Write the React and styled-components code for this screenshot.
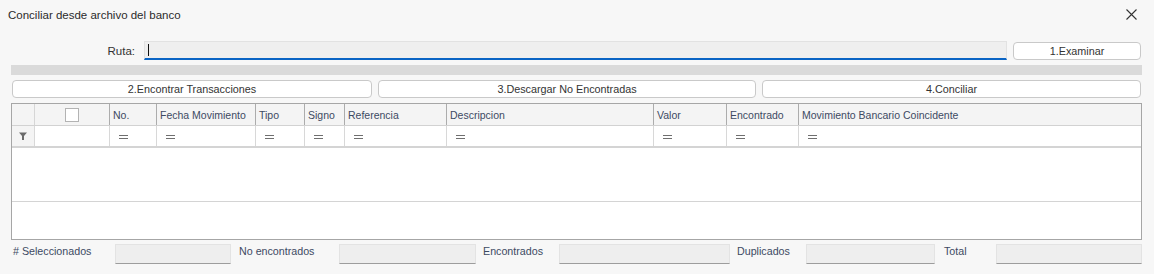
import React from 'react';
import styled, { createGlobalStyle } from 'styled-components';

const GlobalStyle = createGlobalStyle`
  html, body {
    margin: 0;
    padding: 0;
    background: #f7f7f7;
  }
  * {
    box-sizing: border-box;
  }
`;

const Window = styled.div`
  width: 1154px;
  height: 274px;
  background: #f7f7f7;
  font-family: 'Liberation Sans', Arial, sans-serif;
  color: #333333;
  overflow: hidden;
`;

const TitleBar = styled.div`
  height: 29px;
  display: flex;
  align-items: center;
  justify-content: space-between;
  padding: 0 17px 0 8px;
`;

const Title = styled.span`
  font-size: 11.5px;
  color: #2b2b2b;
`;

const CloseButton = styled.button`
  width: 12px;
  height: 12px;
  padding: 0;
  border: 0;
  background: transparent;
  display: flex;
  align-items: center;
  justify-content: center;
  cursor: pointer;
`;

const Content = styled.div`
  padding: 12px 12px 0 11px;
  display: flex;
  flex-direction: column;
`;

const PathRow = styled.div`
  display: flex;
  align-items: flex-end;
  height: 19px;
`;

const PathLabel = styled.label`
  width: 124px;
  text-align: right;
  font-size: 11.5px;
  margin-right: 9px;
  align-self: center;
  color: #333;
`;

const PathInput = styled.div`
  flex: 1;
  height: 19px;
  background: #efefef;
  border-top: 1px solid #e2e2e2;
  border-left: 1px solid #e2e2e2;
  border-right: 1px solid #e2e2e2;
  border-bottom: 2px solid #0a64c4;
  display: flex;
  align-items: center;
  padding-left: 3px;
`;

const Caret = styled.span`
  width: 1px;
  height: 12px;
  background: #111;
`;

const Button = styled.button`
  height: 18px;
  padding: 0;
  border: 1px solid #c9c9c9;
  border-radius: 4px;
  background: #ffffff;
  font-family: 'Liberation Sans', Arial, sans-serif;
  font-size: 10.8px;
  color: #333;
  display: flex;
  align-items: center;
  justify-content: center;
  cursor: pointer;
`;

const BrowseButton = styled(Button)`
  width: 128px;
  margin-left: 6px;
  margin-right: 1px;
`;

const Progress = styled.div`
  margin-top: 5px;
  height: 10px;
  background: #dadada;
`;

const ActionRow = styled.div`
  margin-top: 5px;
  display: grid;
  grid-template-columns: 360px 378px 1fr;
  gap: 6px;
  padding: 0 1px 0 1px;
`;

const GridBox = styled.div`
  margin-top: 5px;
  height: 137px;
  border: 1px solid #a6a6a6;
  background: #ffffff;
  display: flex;
  flex-direction: column;
`;

const columns = '22px 75px 47px 99px 49px 40px 102px 207px 73px 72px 1fr';

const HeaderRow = styled.div`
  display: grid;
  grid-template-columns: ${columns};
  height: 22px;
  background: #f4f4f4;
  border-bottom: 1px solid #d2d2d2;
`;

const HeaderCell = styled.div`
  display: flex;
  align-items: center;
  justify-content: ${(p) => (p.$center ? 'center' : 'flex-start')};
  padding-left: ${(p) => (p.$center ? 0 : 3)}px;
  border-left: ${(p) => (p.$first ? 'none' : `1px solid ${p.$light ? '#d6d6d6' : '#acacac'}`)};
  font-size: 10.5px;
  color: #3d4a63;
  white-space: nowrap;
  overflow: hidden;
`;

const FilterRow = styled.div`
  display: grid;
  grid-template-columns: ${columns};
  height: 22px;
  border-bottom: 2px solid #d4d4d4;
`;

const FilterCell = styled.div`
  display: flex;
  align-items: center;
  justify-content: ${(p) => (p.$center ? 'center' : 'flex-start')};
  padding-left: ${(p) => (p.$center ? 0 : 9)}px;
  border-left: ${(p) => (p.$first ? 'none' : '1px solid #d8d8d8')};
  background: ${(p) => (p.$first ? '#f4f4f4' : '#ffffff')};
`;

const EqualsMark = styled.span`
  width: 9px;
  height: 4px;
  border-top: 1px solid #6f6f6f;
  border-bottom: 1px solid #6f6f6f;
  margin-top: 1px;
`;

const Checkbox = styled.span`
  width: 14px;
  height: 14px;
  border: 1px solid #b3b3b3;
  background: #ffffff;
`;

const DataRow = styled.div`
  height: 54px;
  border-bottom: 1px solid #d4d4d4;
`;

const Footer = styled.div`
  margin-top: 4px;
  display: grid;
  grid-template-columns: 104px 116px 108px 137px 83px 171px 76px 129px 61px 1fr;
  align-items: start;
`;

const FooterLabel = styled.span`
  padding-left: ${(p) => p.$pad}px;
  padding-top: 1px;
  font-size: 10.7px;
  line-height: 13px;
  color: #3d4a63;
  white-space: nowrap;
`;

const CountBox = styled.div`
  height: 20px;
  background: #eeeeee;
  border: 1px solid #e3e3e3;
  border-bottom: 1px solid #9d9d9d;
`;

function FunnelIcon() {
  return (
    <svg width="8" height="8" viewBox="0 0 8 8">
      <path d="M0 0.5 H8 L5 4 V8 H3 V4 Z" fill="#6b6b6b" />
    </svg>
  );
}

const headers = [
  'No.',
  'Fecha Movimiento',
  'Tipo',
  'Signo',
  'Referencia',
  'Descripcion',
  'Valor',
  'Encontrado',
  'Movimiento Bancario Coincidente',
];

const totals = [
  { label: '# Seleccionados', pad: 2 },
  { label: 'No encontrados', pad: 8 },
  { label: 'Encontrados', pad: 7 },
  { label: 'Duplicados', pad: 7 },
  { label: 'Total', pad: 9 },
];

export default function App() {
  return (
    <>
      <GlobalStyle />
      <Window>
        <TitleBar>
          <Title>Conciliar desde archivo del banco</Title>
          <CloseButton aria-label="Cerrar">
            <svg width="11" height="11" viewBox="0 0 11 11">
              <path d="M0.5 0.5 L10.5 10.5 M10.5 0.5 L0.5 10.5" stroke="#333" strokeWidth="1.1" />
            </svg>
          </CloseButton>
        </TitleBar>
        <Content>
          <PathRow>
            <PathLabel>Ruta:</PathLabel>
            <PathInput>
              <Caret />
            </PathInput>
            <BrowseButton>1.Examinar</BrowseButton>
          </PathRow>
          <Progress />
          <ActionRow>
            <Button>2.Encontrar Transacciones</Button>
            <Button>3.Descargar No Encontradas</Button>
            <Button>4.Conciliar</Button>
          </ActionRow>
          <GridBox>
            <HeaderRow>
              <HeaderCell $first />
              <HeaderCell $center $light>
                <Checkbox />
              </HeaderCell>
              {headers.map((h) => (
                <HeaderCell key={h}>{h}</HeaderCell>
              ))}
            </HeaderRow>
            <FilterRow>
              <FilterCell $first $center>
                <FunnelIcon />
              </FilterCell>
              <FilterCell />
              {headers.map((h) => (
                <FilterCell key={h}>
                  <EqualsMark />
                </FilterCell>
              ))}
            </FilterRow>
            <DataRow />
          </GridBox>
          <Footer>
            {totals.map((t) => (
              <React.Fragment key={t.label}>
                <FooterLabel $pad={t.pad}>{t.label}</FooterLabel>
                <CountBox />
              </React.Fragment>
            ))}
          </Footer>
        </Content>
      </Window>
    </>
  );
}
